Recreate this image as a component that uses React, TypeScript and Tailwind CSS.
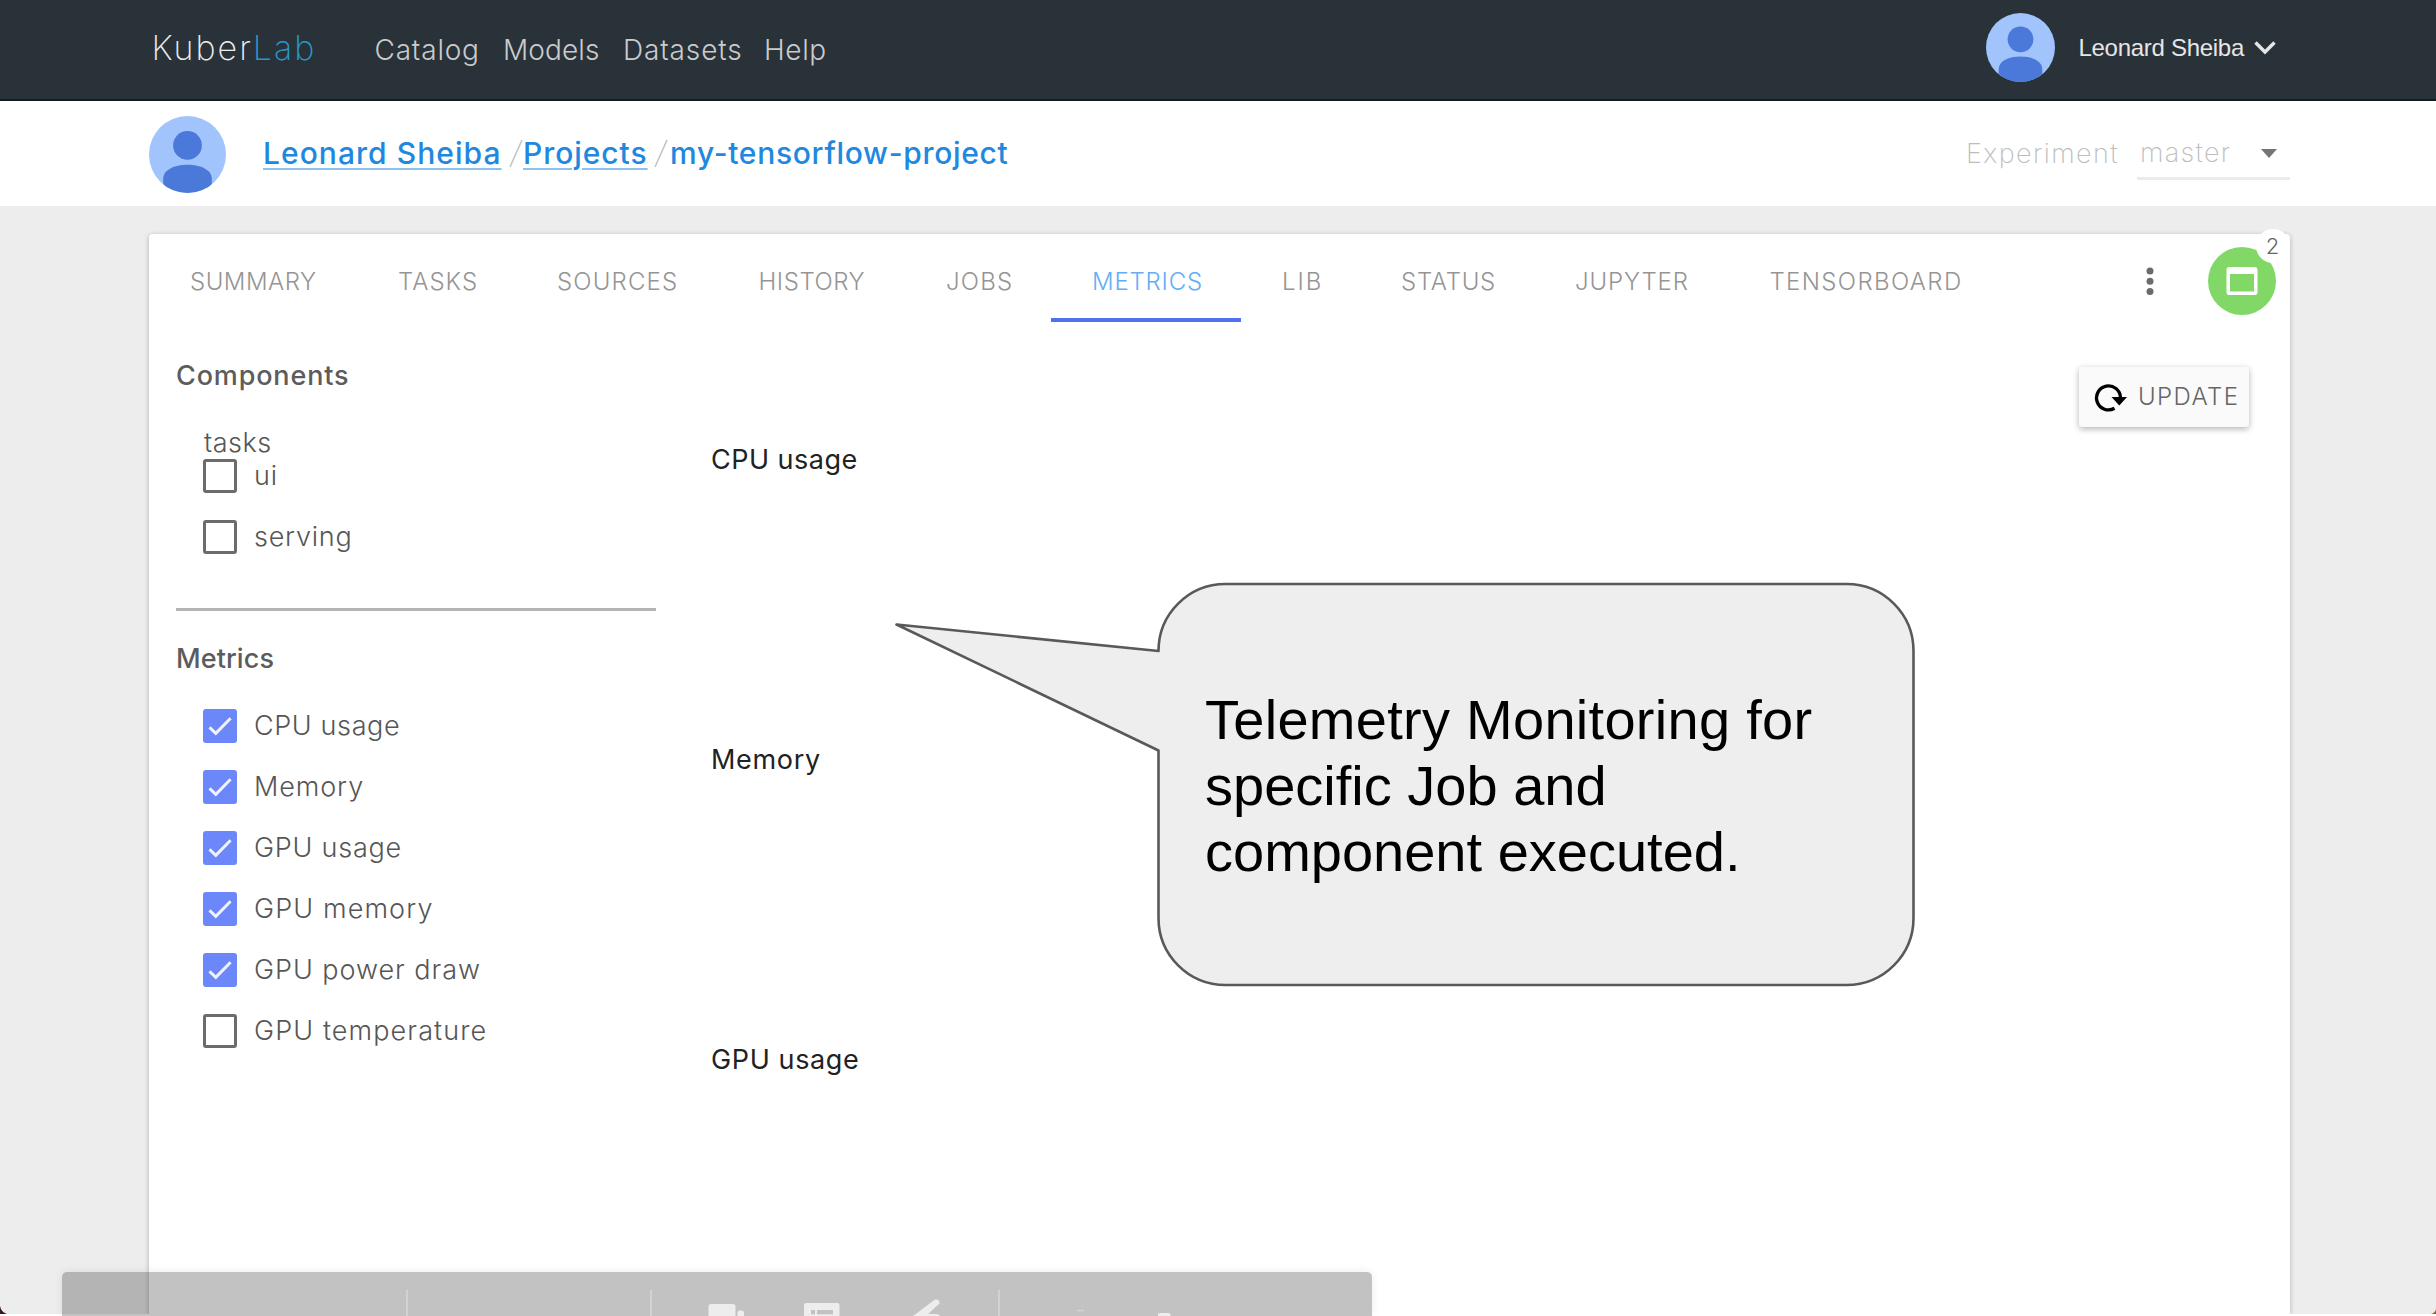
const tabs = [
  { label: "SUMMARY", cls: "w-[208px] tracking-[0.52px]" },
  { label: "TASKS", cls: "w-[159px] tracking-[1.02px]" },
  { label: "SOURCES", cls: "w-[201.5px] tracking-[1.16px]" },
  { label: "HISTORY", cls: "w-[187.5px] tracking-[0.56px]" },
  { label: "JOBS", cls: "w-[146px] tracking-[1.2px]" },
  { label: "METRICS", cls: "w-[190px] tracking-[0.81px]", active: true },
  { label: "LIB", cls: "w-[119px] tracking-[2px]" },
  { label: "STATUS", cls: "w-[174px] tracking-[0.72px]" },
  { label: "JUPYTER", cls: "w-[194.5px] tracking-[0.9px]" },
  { label: "TENSORBOARD", cls: "w-[273.5px] tracking-[1.36px]" },
];

const components = [
  { label: "ui", cls: "tracking-[0.8px]", on: false },
  { label: "serving", cls: "tracking-[0.75px]", on: false },
];

const metrics = [
  { label: "CPU usage", cls: "tracking-[0.62px]", on: true },
  { label: "Memory", cls: "tracking-[0.9px]", on: true },
  { label: "GPU usage", cls: "tracking-[0.76px]", on: true },
  { label: "GPU memory", cls: "tracking-[1.12px]", on: true },
  { label: "GPU power draw", cls: "tracking-[0.96px]", on: true },
  { label: "GPU temperature", cls: "tracking-[1.1px]", on: false },
];

function Avatar({ className }: { className: string }) {
  return (
    <svg viewBox="0 0 76 76" className={className + " shrink-0"}>
      <defs>
        <clipPath id="avatar-disc">
          <circle cx="38" cy="38" r="38" />
        </clipPath>
      </defs>
      <g clipPath="url(#avatar-disc)">
        <rect width="76" height="76" fill="#a1c4fd" />
        <circle cx="38" cy="29" r="14.2" fill="#4a79d9" />
        <path d="M14 76V62C14 53 25 48 38 48S62 53 62 62V76Z" fill="#4a79d9" />
      </g>
    </svg>
  );
}

function CheckRow({ label, cls, on }: { label: string; cls: string; on: boolean }) {
  return (
    <label className="flex h-[34px] items-center gap-[17px]">
      {on ? (
        <span className="flex size-[34px] items-center justify-center rounded-[3px] bg-[#6c87f9]">
          <svg viewBox="0 0 34 34" className="size-[34px]" fill="none" stroke="#eef1fe" strokeWidth="3">
            <path d="M6.5 18.3L12.8 24.4L27.6 9.2" />
          </svg>
        </span>
      ) : (
        <span className="size-[34px] rounded-[3px] border-3 border-[#6b6b6b]" />
      )}
      <span className={"text-[27px] leading-[34px] font-light text-[#565656] " + cls}>{label}</span>
    </label>
  );
}

function Chart({ title, cls }: { title: string; cls: string }) {
  return (
    <section className="h-[300px] shrink-0">
      <h3 className={"text-[27px] leading-[40px] font-normal text-[#222] " + cls}>{title}</h3>
    </section>
  );
}

function Callout() {
  return (
    <div className="absolute top-[580px] left-[890px] h-[410px] w-[1030px]">
      <svg viewBox="890 580 1030 410" className="absolute inset-0 size-full">
        <path
          d="M1158.5 651A67 67 0 0 1 1225.500 584H1846.500A67 67 0 0 1 1913.500 651V918A67 67 0 0 1 1846.500 985H1225.500A67 67 0 0 1 1158.500 918V750.500L896.500 624.500Z"
          fill="#eeeeee"
          stroke="#595959"
          strokeWidth="2.6"
          strokeLinejoin="round"
        />
      </svg>
      <p className="relative pt-[107px] pl-[315px] font-['Liberation_Sans',sans-serif] text-[56px] leading-[66px] text-black">
        <span className="block tracking-[0.28px]">Telemetry Monitoring for</span>
        <span className="block">specific Job and</span>
        <span className="block">component executed.</span>
      </p>
    </div>
  );
}

function Toolbar() {
  return (
    <div className="absolute bottom-0 left-[62px] h-[44px] w-[1310px] overflow-hidden rounded-t-[5px] bg-black/24 shadow-[0_0_10px_rgba(0,0,0,0.08)]">
      <svg viewBox="62 1272 1310 44" className="size-full">
        <g fill="#d3d3d3">
          <rect x="406" y="1290" width="2" height="26" />
          <rect x="650" y="1290" width="2" height="26" />
          <rect x="998" y="1290" width="2" height="26" />
        </g>
        <g fill="#ededed">
          <path d="M708.500 1316V1306.500Q708.500 1304 711 1304H733Q735.500 1304 735.500 1306.500V1316Z" />
          <path d="M737.500 1316V1313Q737.500 1310.500 740 1310.500H741.500Q744 1310.500 744 1313V1316Z" />
          <path d="M804 1316V1305Q804 1303 806 1303H837.500Q839.500 1303 839.500 1305V1316Z" />
          <path d="M913 1316L935 1299.500Q940 1299 939.500 1303.500L928 1314H936Q939 1314 940 1316Z" />
          <path d="M1158 1316V1315Q1158 1313 1160 1313H1168.500Q1170.500 1313 1170.500 1315V1316Z" />
        </g>
        <g fill="#c2c2c2">
          <rect x="811" y="1310" width="4" height="4.300" />
          <rect x="817" y="1310" width="16" height="4.300" />
        </g>
        <rect x="1077" y="1309.800" width="7" height="1.500" fill="#d3d3d3" />
      </svg>
    </div>
  );
}

export default function App() {
  return (
    <div className="relative flex h-[1316px] w-[2436px] flex-col overflow-hidden bg-white font-['Inter',sans-serif]">
      <header className="flex h-[101px] shrink-0 items-center border-b-2 border-[#151c20] bg-[#2a3239] pl-[151.500px]">
        <a className="relative -top-[2px] flex w-[223px] text-[34px] leading-[40px] font-extralight text-[#ececec]">
          <span className="tracking-[2px]">Kuber</span>
          <span className="tracking-[2px] text-[#2a97c8]">Lab</span>
        </a>
        <nav className="flex text-[28px] leading-[40px] font-light text-[#c9cbcc]">
          <a className="w-[128.500px] tracking-[0.8px]">Catalog</a>
          <a className="w-[120px] tracking-[0.1px]">Models</a>
          <a className="w-[141px] tracking-[0.85px]">Datasets</a>
          <a className="tracking-[0.6px]">Help</a>
        </nav>
        <div className="relative -top-[2px] mr-[160px] ml-auto flex items-center">
          <Avatar className="size-[69px]" />
          <span className="ml-[23px] font-['Liberation_Sans',sans-serif] text-[24px] tracking-[-0.28px] text-[#e6e6e6]">
            Leonard Sheiba
          </span>
          <svg viewBox="0 0 22 16" className="ml-[10px] h-[16px] w-[22px]" fill="none" stroke="#e6e6e6" strokeWidth="3.400">
            <path d="M1.500 2.500L11 12L20.500 2.500" />
          </svg>
        </div>
      </header>

      <div className="flex h-[105px] shrink-0 items-center bg-white pr-[146px] pl-[149px]">
        <Avatar className="relative top-px size-[77px]" />
        <div className="relative -top-px ml-[37px] flex text-[30px] leading-[40px] font-medium text-[#2188e0]">
          <a className="w-[246px] tracking-[1.05px]">
            <span className="underline decoration-[#8cc0ef] decoration-2 underline-offset-[4px]">Leonard Sheiba</span>
          </a>
          <svg viewBox="0 0 14 40" className="h-[40px] w-[14px]" stroke="#c4c4c4" strokeWidth="1.600">
            <path d="M1 34L13 7" />
          </svg>
          <a className="w-[131px] tracking-[0.95px]">
            <span className="underline decoration-[#8cc0ef] decoration-2 underline-offset-[4px]">Projects</span>
          </a>
          <svg viewBox="0 0 14 40" className="h-[40px] w-[14px]" stroke="#c4c4c4" strokeWidth="1.600">
            <path d="M1 34L13 7" />
          </svg>
          <a className="ml-[2px] tracking-[0.7px]">my-tensorflow-project</a>
        </div>
        <div className="relative top-px ml-auto flex text-[27px] leading-[48px] font-extralight text-[#bdbdbd]">
          <span className="w-[171px] tracking-[1.4px]">Experiment</span>
          <div className="flex h-[50px] w-[153px] items-center justify-between border-b-3 border-[#ebebeb] pr-[13px] pl-[3px]">
            <span className="tracking-[1.3px]">master</span>
            <span className="border-x-[8.500px] border-t-[9px] border-x-transparent border-t-[#757575]" />
          </div>
        </div>
      </div>

      <main className="flex h-[1108px] shrink-0 overflow-hidden bg-[#ededed] pt-[28px] pl-[149px]">
        <div className="flex w-[2141px] flex-col rounded-t-[4px] bg-white shadow-[0_1px_5px_rgba(0,0,0,0.26)]">
          <div className="flex h-[88px] shrink-0">
            {tabs.map((t) => (
              <a
                key={t.label}
                className={
                  "flex h-[88px] flex-col text-[24px] leading-[96px] font-light " +
                  (t.active ? "text-[#62aef5] " : "text-[#959595] ") +
                  t.cls
                }
              >
                <span className="h-[84px] pl-[41px]">{t.label}</span>
                {t.active && <span className="h-[3.500px] bg-[#4f70f3]" />}
              </a>
            ))}
            <svg viewBox="0 0 8 32" className="mt-[31px] ml-[144px] h-[32px] w-[8px]" fill="#6b6b6b">
              <circle cx="4" cy="6" r="3.500" />
              <circle cx="4" cy="16.300" r="3.500" />
              <circle cx="4" cy="26.500" r="3.500" />
            </svg>
            <div className="relative mt-[13px] ml-[53.500px] flex size-[68px] items-center justify-center rounded-full bg-[#82d866]">
              <svg viewBox="0 0 32 28" className="h-[28px] w-[32px]" fill="none">
                <path
                  fillRule="evenodd"
                  fill="#fff"
                  d="M3 0H29Q31.500 0 31.500 3V25Q31.500 28 29 28H3Q.5 28 .5 25V3Q.5 0 3 0ZM4 7V24.500H28V7Z"
                />
              </svg>
              <span className="absolute -top-[18px] left-[48px] flex size-[34px] items-center justify-center rounded-full bg-white text-[22px] font-light text-[#666]">
                2
              </span>
            </div>
          </div>

          <div className="flex flex-1 pl-[27px]">
            <aside className="flex w-[480px] flex-col pt-[34px]">
              <h2 className="text-[27px] leading-[40px] font-medium tracking-[0.85px] text-[#5c5c5c]">Components</h2>
              <div className="mt-[31px] flex flex-col pl-[27px]">
                <span className="h-[32px] pl-px text-[27px] leading-[32px] font-light tracking-[0.5px] text-[#565656]">
                  tasks
                </span>
                <div className="flex flex-col gap-[27px]">
                  {components.map((c) => (
                    <CheckRow key={c.label} {...c} />
                  ))}
                </div>
              </div>
              <hr className="mt-[54px] h-[3px] border-0 bg-[#b3b3b3]" />
              <h2 className="mt-[28px] text-[27px] leading-[40px] font-medium tracking-[0.1px] text-[#5c5c5c]">Metrics</h2>
              <div className="mt-[30px] flex flex-col gap-[27px] pl-[27px]">
                {metrics.map((m) => (
                  <CheckRow key={m.label} {...m} />
                ))}
              </div>
            </aside>
            <div className="ml-[55px] flex flex-1 flex-col overflow-hidden pt-[118px]">
              <Chart title="CPU usage" cls="tracking-[0.49px]" />
              <Chart title="Memory" cls="tracking-[0.69px]" />
              <Chart title="GPU usage" cls="tracking-[0.62px]" />
            </div>
            <button className="mt-[45px] mr-[41px] flex h-[60px] w-[170px] items-center rounded-[3px] bg-[#fafafa] pl-[15px] text-[24px] font-light tracking-[1.4px] text-[#666] shadow-[0_2px_6px_rgba(0,0,0,0.3)]">
              <svg viewBox="0 0 34 30" className="mr-[10px] h-[30px] w-[34px] shrink-0" fill="none">
                <path d="M20.500 26.300A12 12 0 1 1 26.500 15.500" stroke="#000" strokeWidth="3.300" />
                <path d="M17.500 15H33L25.300 23.500Z" fill="#000" />
              </svg>
              UPDATE
            </button>
          </div>
        </div>
      </main>

      <Callout />
      <Toolbar />
      <svg viewBox="0 0 8 8" className="absolute bottom-[2px] left-0 size-[8px]">
        <path d="M0 0Q1 6 7 8H0Z" fill="#3a1c16" />
      </svg>
      <svg viewBox="0 0 8 8" className="absolute right-0 bottom-[2px] size-[5px]">
        <path d="M8 0Q7 6 0 8H8Z" fill="#7a6347" />
      </svg>
    </div>
  );
}
